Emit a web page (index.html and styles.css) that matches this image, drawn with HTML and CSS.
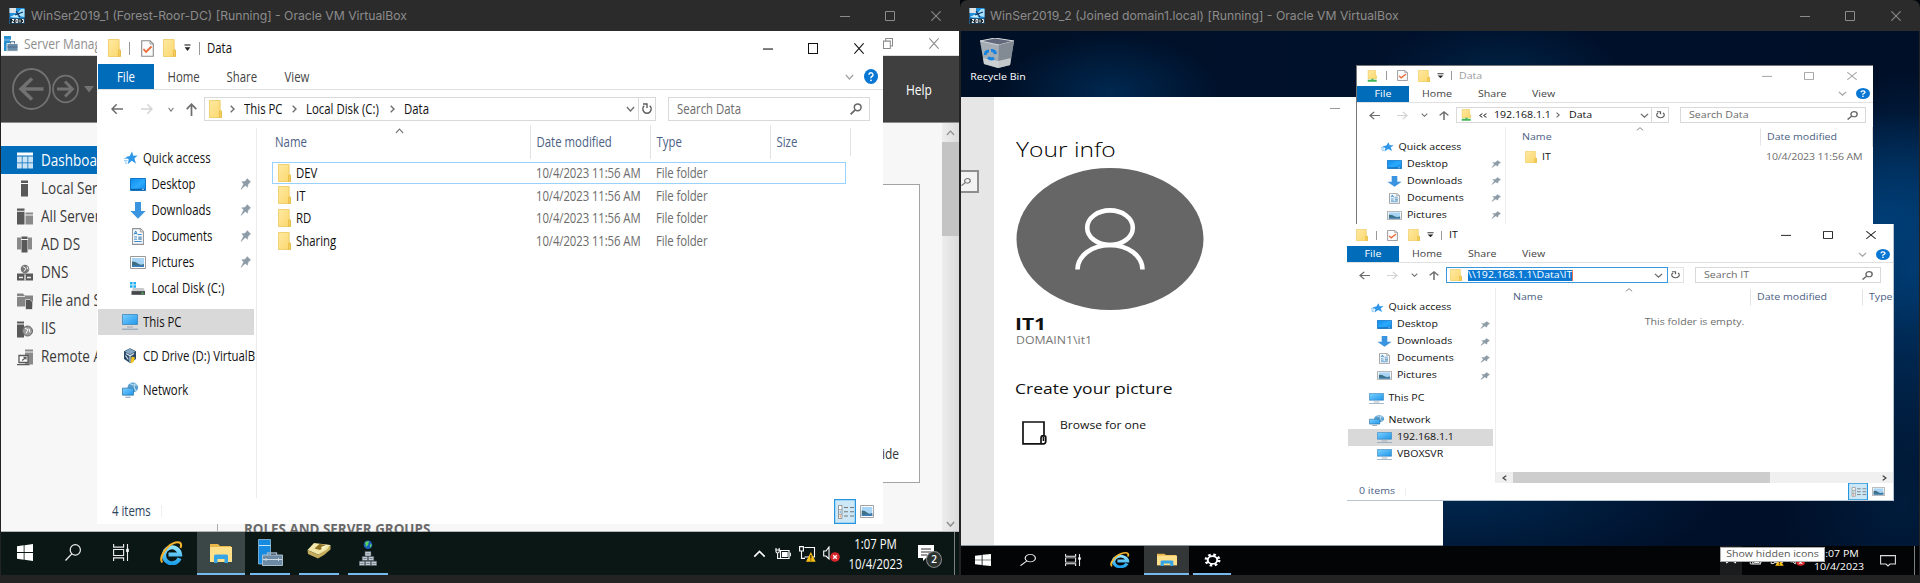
FILE: index.html
```html
<!DOCTYPE html>
<html lang="en">
<head>
<meta charset="utf-8">
<title>Oracle VM VirtualBox</title>
<link rel="stylesheet" href="styles.css">
</head>
<body>
<svg class="defs" aria-hidden="true">
  <defs>
    <linearGradient id="gFolder" x1="0" y1="0" x2="1" y2="1"><stop offset="0" stop-color="#ffe9a2"/><stop offset="1" stop-color="#fbd76c"/></linearGradient>
    <linearGradient id="gBlue" x1="0" y1="0" x2="1" y2="1"><stop offset="0" stop-color="#7cd0ff"/><stop offset="1" stop-color="#1e96ea"/></linearGradient>
    <linearGradient id="gDesk" x1="0" y1="0" x2="1" y2="1"><stop offset="0" stop-color="#0c8df0"/><stop offset=".55" stop-color="#2ba9fc"/><stop offset="1" stop-color="#0a86e8"/></linearGradient>
    <linearGradient id="gIe" x1="0" y1="0" x2="0" y2="1"><stop offset="0" stop-color="#8ee3ff"/><stop offset="1" stop-color="#1fa0ea"/></linearGradient>
  </defs>
  <symbol id="folder" viewBox="0 0 14 18" preserveAspectRatio="none"><path d="M.5.5H12V11H13.5V17.5H.5Z" fill="url(#gFolder)" stroke="#ecc755" stroke-width=".8"/><path d="M11.3 17.3V11.4L12.3 10.4 13.5 11.4V17.3Z" fill="#f7cf5c" stroke="#dcb13c" stroke-width=".6"/></symbol>
  <symbol id="netfolder" viewBox="0 0 14 18" preserveAspectRatio="none"><path d="M2.500.5H11V8.500H12.200V13H2.500Z" fill="url(#gFolder)" stroke="#ecc755" stroke-width=".8"/><path d="M6.3 13H8.700V14.800H12.500V17.500H2V14.800H6.3Z" fill="#45b656"/></symbol>
  <symbol id="check" viewBox="0 0 13 17" preserveAspectRatio="none"><path d="M.7.7H9L12.3 4V16.3H.7Z" fill="#fdfdfd" stroke="#8a8a8a" stroke-width="1.1"/><path d="M9 .7V4H12.3" fill="none" stroke="#8a8a8a" stroke-width=".8"/><path d="M2.5 9 5 12 10.5 6.5" fill="none" stroke="#ea6a36" stroke-width="1.8"/></symbol>
  <symbol id="dd" viewBox="0 0 8 8" preserveAspectRatio="none"><path d="M.5 1H7.5" stroke="#222" stroke-width="1.1"/><path d="M.8 3.3H7.2L4 7Z" fill="#222"/></symbol>
  <symbol id="min" viewBox="0 0 10 10" preserveAspectRatio="none"><path d="M0 5.5H10" stroke="currentColor"/></symbol>
  <symbol id="max" viewBox="0 0 10 10" preserveAspectRatio="none"><path d="M.5.5H9.5V9.5H.5Z" fill="none" stroke="currentColor"/></symbol>
  <symbol id="close" viewBox="0 0 10 10" preserveAspectRatio="none"><path d="M.3.3 9.7 9.7M9.7.3.3 9.7" fill="none" stroke="currentColor" stroke-width="1.1"/></symbol>
  <symbol id="restore" viewBox="0 0 10 10" preserveAspectRatio="none"><path d="M.5 2.8H7.3V9.5H.5ZM2.7 2.6V.5H9.5V7.3H7.5" fill="none" stroke="currentColor"/></symbol>
  <symbol id="down" viewBox="0 0 10 6" preserveAspectRatio="none"><path d="M1 1 5 5 9 1" fill="none" stroke="currentColor" stroke-width="1.5"/></symbol>
  <symbol id="up" viewBox="0 0 10 6" preserveAspectRatio="none"><path d="M1 5 5 1 9 5" fill="none" stroke="currentColor" stroke-width="1.2"/></symbol>
  <symbol id="right" viewBox="0 0 5 8" preserveAspectRatio="none"><path d="M.7.8 4 4 .7 7.2" fill="none" stroke="currentColor" stroke-width="1.4"/></symbol>
  <symbol id="left" viewBox="0 0 5 8" preserveAspectRatio="none"><path d="M4.3.8 1 4 4.3 7.2" fill="none" stroke="currentColor" stroke-width="1.4"/></symbol>
  <symbol id="back" viewBox="0 0 12 12" preserveAspectRatio="none"><path d="M12 6H1M5.7 1.2 1 6 5.7 10.8" fill="none" stroke="currentColor" stroke-width="1.5"/></symbol>
  <symbol id="fwd" viewBox="0 0 12 12" preserveAspectRatio="none"><path d="M0 6H11M6.3 1.2 11 6 6.3 10.8" fill="none" stroke="currentColor" stroke-width="1.5"/></symbol>
  <symbol id="uparrow" viewBox="0 0 11 13" preserveAspectRatio="none"><path d="M5.5 13V1.2M.7 6.2 5.5 1.2 10.3 6.2" fill="none" stroke="currentColor" stroke-width="1.7"/></symbol>
  <symbol id="refresh" viewBox="0 0 10 12" preserveAspectRatio="none"><path d="M2.2 2.8A4.1 4.3 0 1 0 7.8 2.8" fill="none" stroke="#5c5c5c" stroke-width="1.5"/><path d="M1 1H5V5" fill="none" stroke="#5c5c5c" stroke-width="1.4"/></symbol>
  <symbol id="mag" viewBox="0 0 12 12" preserveAspectRatio="none"><circle cx="7.7" cy="4.3" r="3.4" fill="none" stroke="currentColor" stroke-width="1.5"/><path d="M5.2 6.8.6 11.4" stroke="currentColor" stroke-width="1.7"/></symbol>
  <symbol id="star" viewBox="0 0 14 14" preserveAspectRatio="none"><path d="M8 .5 9.3 4.7 13.6 4.6 10.4 7.6 12 12.6 7.8 9.8 3.6 13.2 4.8 8.6 1.6 6 5.8 5Z" fill="#2f97e8"/><path d="M.2 7.5H4M0 9.8H3.6M1 12H3" stroke="#68b6f0" stroke-width=".9"/></symbol>
  <symbol id="desktop" viewBox="0 0 16 13" preserveAspectRatio="none"><path d="M.5.5H15.5V12.5H.5Z" fill="url(#gDesk)" stroke="#1374c4"/><path d="M1 11.4H15" stroke="#0d5fa8" stroke-width="1.2"/><path d="M12 11.3h2" stroke="#fff" stroke-width=".7"/></symbol>
  <symbol id="download" viewBox="0 0 16 17" preserveAspectRatio="none"><path d="M5 0H11V9H15.6L8 16.8.4 9H5Z" fill="#3a94e0"/></symbol>
  <symbol id="doc" viewBox="0 0 13 17" preserveAspectRatio="none"><path d="M.6.6H9.2L12.4 3.8V16.4H.6Z" fill="#f7f9fb" stroke="#909498" stroke-width="1.1"/><path d="M9 .8V4H12.2" fill="#ddd" stroke="#909498" stroke-width=".8"/><path d="M2.3 6.5 4 3 5.6 6.5M2.9 5.5H5M6.5 6.5H10.5M2.3 9H5.5M2.3 11.2H5.5M2.3 13.5H10.5" fill="none" stroke="#3487c9"/><path d="M6.8 8.4H10.6V12H6.8Z" fill="#7fa9c4"/></symbol>
  <symbol id="pic" viewBox="0 0 16 13" preserveAspectRatio="none"><path d="M.5.5H15.5V12.5H.5Z" fill="#fff" stroke="#9a9a9a"/><path d="M2 2H14V11H2Z" fill="#a8d5f5"/><path d="M2 5.5Q6 5.5 8 7.5T14 8V11H2Z" fill="#3f6f80"/><path d="M2 9.3H14V11H2Z" fill="#3c7fb8"/></symbol>
  <symbol id="disk" viewBox="0 0 16 14" preserveAspectRatio="none"><path d="M0 0H2.600V2.8H0ZM3.400 0H6V2.8H3.400ZM0 3.5H2.600V6.3H0ZM3.400 3.5H6V6.3H3.400Z" fill="#22aef0"/><path d="M3 6.500H13.5L15 10H1.5Z" fill="#c7c9cb"/><path d="M1.5 9.8H15V13.8H1.5Z" fill="#44484b"/><path d="M11.5 12H13.5" stroke="#4be06a" stroke-width="1.3"/></symbol>
  <symbol id="pc" viewBox="0 0 16 16" preserveAspectRatio="none"><path d="M.5.5H15.5V10.5H.5Z" fill="url(#gBlue)" stroke="#3d86bd" stroke-width=".8"/><path d="M5 13H11" stroke="#9aa6b0"/><path d="M0 15.2H16" stroke="#8ba1b7" stroke-width="1.1"/></symbol>
  <symbol id="net" viewBox="0 0 16 17" preserveAspectRatio="none"><circle cx="10.8" cy="5.8" r="5.3" fill="#5a9fce"/><path d="M8 1.6Q12 4 15 3M13 1.2Q10.5 6 14.5 9.8" fill="none" stroke="#bcdff2" stroke-width="1.1"/><path d="M.5 6.5H11.5V14H.5Z" fill="url(#gBlue)" stroke="#3377aa" stroke-width=".8"/><path d="M3.5 16.2H8.5" stroke="#8095a8"/></symbol>
  <symbol id="cd" viewBox="0 0 16 16" preserveAspectRatio="none"><path d="M8 .3 14 3.3V11L8 15 2 11V3.3Z" fill="#294967"/><path d="M8 .8 13.3 3.4 8 6.4 2.7 3.4Z" fill="#86a8c4"/><path d="M4 5.5 8 7.8 12 5.5M8 8V14M3.5 7.5 6.3 11.5" fill="none" stroke="#dce8f1" stroke-width="1.1"/><path d="M9.6 8.4 13 9.5 11.5 14 8.5 15.6Z" fill="#f2c21b"/></symbol>
  <symbol id="pin" viewBox="0 0 11 12" preserveAspectRatio="none"><path d="M7.2.6 10.6 4 9.4 4.8 7.8 6.8 7.6 9.2 5.2 7.4 1 11.4 3.7 6 1.8 3.8 4.6 3.6 6.4 2Z" fill="#8d9ba6" stroke="#8d9ba6" stroke-width=".5"/></symbol>
  <symbol id="help" viewBox="0 0 14 14" preserveAspectRatio="none"><circle cx="7" cy="7" r="7" fill="#0877d4"/><path d="M5 5.4Q5.1 3.6 7 3.6T9 5.3Q9 6.4 7.8 7T7 8.6" fill="none" stroke="#fff" stroke-width="1.4"/><circle cx="7" cy="10.6" r=".9" fill="#fff"/></symbol>
  <symbol id="details" viewBox="0 0 22 25" preserveAspectRatio="none"><path d="M.6.6H21.4V24.4H.6Z" fill="#cce8f7" stroke="#2796e0" stroke-width="1.2"/><path d="M4.5 6.5H8V19.5H4.5ZM4.5 10.8H8M4.5 15.2H8" fill="#fff" stroke="#8c8c8c" stroke-width=".9"/><path d="M10 8.5H14M16 8.5H20M10 12.8H14M16 12.8H20M10 17H14M16 17H20" stroke="#777" stroke-width="1.1"/><path d="M6.2 12V14" stroke="#4ba0e0"/><path d="M6.2 16.4V18.4" stroke="#e0703a"/></symbol>
  <symbol id="vbox" viewBox="0 0 16 16" preserveAspectRatio="none"><path d="M.5 0H15.5V16H.5Z" fill="#1f8fdc"/><path d="M.5 0H7V5H.5Z" fill="#dfe6ea"/><path d="M7 7 12 1H15.5V9L10 8Z" fill="#a9e2ff"/><path d="M1 9 7 6 10 10Z" fill="#ccefff"/><path d="M7 3 11 9M6 7 14 4" stroke="#0b2f5c" stroke-width="1.1"/><path d="M1 10.5H15.5V15.8H1Z" fill="#1a2833"/><path d="M3 11.5H5L3 14.5H5M7 11.5H8.8V14.5H7ZM11 11.5V14.5M13 11.5H14.5V14.5H13" fill="none" stroke="#fff" stroke-width=".9"/></symbol>
  <symbol id="smgr" viewBox="0 0 14 16" preserveAspectRatio="none"><path d="M0 1H7V4.4H0ZM0 5H6V15H0Z" fill="#2a8fd0"/><path d="M3 8H14V15.3H3Z" fill="#6d8ca8" stroke="#fff" stroke-width=".8"/><path d="M6.5 8V6.3H10.5V8M3.5 11.3H13.5" fill="none" stroke="#486b8c"/></symbol>
  <symbol id="win" viewBox="0 0 16 16" preserveAspectRatio="none"><path d="M0 2.2 6.7 1.2V7.6H0ZM7.5 1.1 16 0V7.6H7.5ZM0 8.4H6.7V14.8L0 13.8ZM7.5 8.4H16V16L7.5 14.9Z" fill="#fff"/></symbol>
  <symbol id="search" viewBox="0 0 16 17" preserveAspectRatio="none"><ellipse cx="10.3" cy="5.9" rx="5.1" ry="5.3" fill="none" stroke="currentColor" stroke-width="1.2"/><path d="M6.8 9.9.5 16.5" stroke="currentColor" stroke-width="1.3"/></symbol>
  <symbol id="taskview" viewBox="0 0 16 16" preserveAspectRatio="none"><path d="M.6 0V3H10.6V0M.6 5.2H10.6V10.8H.6ZM.6 16V13H10.6V16M14.5 0V16" fill="none" stroke="#eee" stroke-width="1.1"/><path d="M13.2 4.5H15.8V7.5H13.2Z" fill="#fff"/></symbol>
  <symbol id="ie" viewBox="0 0 23 24" preserveAspectRatio="none"><path d="M19.5 17.2A8 8 0 1 1 20 13.5H8.5" fill="none" stroke="url(#gIe)" stroke-width="4.2"/><path d="M2.2 21.5C-1.5 16 7.5 3.5 15.5 1.5 20.5.3 22 3 20.5 6.8" fill="none" stroke="#f3b229" stroke-width="2.1"/></symbol>
  <symbol id="explorer" viewBox="0 0 22 20" preserveAspectRatio="none"><path d="M0 1H8L10 3H21V6H0Z" fill="#e9b64a"/><path d="M0 4H22V19H0Z" fill="#ffe08a"/><path d="M4 20V13Q4 11.5 5.5 11.5H16.5Q18 11.5 18 13V20H14.5V16H7.5V20Z" fill="#37a5e3"/></symbol>
  <symbol id="server" viewBox="0 0 25 27" preserveAspectRatio="none"><path d="M.5.5H12.5V25H.5Z" fill="#178be0" stroke="#a3d1f0" stroke-width=".7"/><path d="M1 6.5H12.5" stroke="#c7e5fa"/><path d="M9.5 16V14H18.5V16" fill="none" stroke="#9cb2c6" stroke-width="1.3"/><path d="M4.5 16H24.5V26.5H4.5Z" fill="#6d8aa4" stroke="#b7c9d8" stroke-width=".9"/><path d="M5 20.5H24M8 19V22M20.5 19V22" stroke="#cdd9e3"/></symbol>
  <symbol id="card" viewBox="0 0 24 17" preserveAspectRatio="none"><path d="M.5 8 7 1 23.5 3 19 10.5 11 12.5Z" fill="#f2e6a9"/><path d="M.5 8 11 12.5V16.5L1 12ZM11 12.5 19.5 8 23.5 3V7.5L17 13 11 16.5Z" fill="#c3ac5c"/><path d="M7.5 6.5 12.5 2 19 3 13 8Z" fill="#8e7020"/><path d="M14 5 20.5 2.5 15.5 8Z" fill="#fff7cf"/></symbol>
  <symbol id="tree" viewBox="0 0 18 26" preserveAspectRatio="none"><circle cx="9" cy="4.7" r="4.3" fill="#1b5fb6"/><path d="M6 2 10 1 9 5 7 7ZM11 4 13 5 11 8Z" fill="#5bd25d"/><path d="M6 11.5H12V16H6ZM3.2 16.5H8.7V20.5H3.2ZM9.3 16.5H14.8V20.5H9.3ZM.3 21.2H5.8V25.5H.3ZM6.3 21.2H11.7V25.5H6.3ZM12.2 21.2H17.7V25.5H12.2Z" fill="#c1cad1" stroke="#4b5961" stroke-width=".6"/><path d="M7.5 13.8H10.5M4.5 18.5H7.5M10.5 18.5H13.5M1.5 23.5H4.5M7.5 23.5H10.5M13.5 23.5H16.5" stroke="#66737c" stroke-width=".8"/></symbol>
  <symbol id="gear" viewBox="0 0 16 16" preserveAspectRatio="none"><circle cx="8" cy="8" r="5.9" fill="none" stroke="#fff" stroke-width="3.2" stroke-dasharray="2.3 2.334"/><circle cx="8" cy="8" r="4.5" fill="none" stroke="#fff" stroke-width="1.9"/></symbol>
  <symbol id="battery" viewBox="0 0 16 13" preserveAspectRatio="none"><path d="M1 1V4.5Q1 6 2.6 6T4.2 4.5V1M2.6 6V11.5H5M.3 3H5" fill="none" stroke="#fff" stroke-width="1.1"/><path d="M5.5 3.5H14V11.5H5.5Z" fill="#0b1715" stroke="#fff" stroke-width="1.2"/><path d="M7 5H12.7V10H7Z" fill="#fff"/><path d="M15.4 5.7V9.3" stroke="#fff"/></symbol>
  <symbol id="network" viewBox="0 0 17 16" preserveAspectRatio="none"><path d="M5.5 1.5H15.5V11H5.5M8 13.5H12" fill="none" stroke="#fff" stroke-width="1.1"/><path d="M.6.6H4.4V5H.6ZM2.5 5V12.4H6" fill="none" stroke="#fff" stroke-width="1.1"/><path d="M11.8 6 16.7 15.7H7Z" fill="#f9bf14"/><path d="M11.8 9V12.4M11.8 13.4V14.6" stroke="#372600" stroke-width="1.2"/></symbol>
  <symbol id="speaker" viewBox="0 0 17 16" preserveAspectRatio="none"><path d="M.7 5H3L6 1V13L3 10H.7Z" fill="none" stroke="#fff" stroke-width="1.1"/><circle cx="12" cy="11" r="4.8" fill="#d7262b"/><path d="M10.2 9.2 13.8 12.8M13.8 9.2 10.2 12.8" stroke="#fff" stroke-width="1.3"/></symbol>
</svg>

<main class="host">
  <section class="vm vm-left">
    <header class="vm-title"><svg class="vbox"><use href="#vbox"/></svg><span class="vm-name">WinSer2019_1 (Forest-Roor-DC) [Running] - Oracle VM VirtualBox</span>
      <svg class="wc"><use href="#min"/></svg><svg class="wc"><use href="#max"/></svg><svg class="wc"><use href="#close"/></svg></header>
    <div class="screen screen-left">
      <div class="sm">
        <div class="sm-title"><svg class="sm-logo"><use href="#smgr"/></svg><span class="t">Server Manag</span><svg class="sm-wc"><use href="#restore"/></svg><svg class="sm-wc"><use href="#close"/></svg></div>
        <div class="sm-head">
          <svg class="sm-arrows" viewBox="0 0 84 44"><g fill="none" stroke="#727272"><ellipse cx="20.500" cy="22" rx="18.500" ry="20" stroke-width="1.800"/><path d="M32.500 22H10M21 11.500 10 22 21 32.500" stroke-width="3.500"/><ellipse cx="54.500" cy="22" rx="12.500" ry="13.300" stroke-width="1.700"/><path d="M46 22H61M54 14.500 61.500 22 54 29.500" stroke-width="2.800"/></g><path d="M73 19H83L78 25.500Z" fill="#727272"/></svg>
          <span class="t">Help</span>
        </div>
        <div class="sm-body">
          <nav class="sm-nav">
            <div class="sm-item on"><svg viewBox="0 0 16 16"><path d="M0 0H16V3H0Z" fill="#fff"/><path d="M0 4H4.800V10H0ZM5.500 4H10.500V10H5.500ZM11.200 4H16V10H11.200ZM0 10.800H4.800V16H0ZM5.500 10.800H10.500V16H5.500ZM11.200 10.800H16V16H11.200Z" fill="#c9e2f4"/></svg><span class="t">Dashboa</span></div>
            <div class="sm-item"><svg viewBox="0 0 16 16"><path d="M4 0H11V2.500H4ZM4 3.500H11V16H4Z" fill="#595959"/></svg><span class="t">Local Ser</span></div>
            <div class="sm-item"><svg viewBox="0 0 16 16"><path d="M0 0H7.500V2.200H0ZM0 3.200H7.500V16H0Z" fill="#595959"/><path d="M8.500 4H16V6H8.500ZM8.500 7H16V16H8.500Z" fill="#8a8a8a"/></svg><span class="t">All Server</span></div>
            <div class="sm-item"><svg viewBox="0 0 16 16"><path d="M0 1H4V13H0ZM11 1H15V13H11Z" fill="#8a8a8a"/><path d="M4.500 0H10.500V2.500H4.500ZM4.500 3.500H10.500V16H4.500Z" fill="#595959"/></svg><span class="t">AD DS</span></div>
            <div class="sm-item"><svg viewBox="0 0 16 16"><circle cx="8" cy="4.500" r="4.300" fill="#777"/><path d="M6 2 9 4 7 7M10 2 11 5" stroke="#eee" fill="none"/><path d="M0 9H16V16H0Z" fill="#595959"/><path d="M2 13H6M10 13H14M8 10V16" stroke="#eee" stroke-width="1.300"/></svg><span class="t">DNS</span></div>
            <div class="sm-item"><svg viewBox="0 0 16 16"><path d="M0 0H6L7.500 2H16V13H0Z" fill="#858585"/><path d="M0 3H8" stroke="#ddd"/><path d="M8.500 6H13L15.500 8.500V16H8.500Z" fill="#555" stroke="#fff" stroke-width=".6"/></svg><span class="t">File and S</span></div>
            <div class="sm-item"><svg viewBox="0 0 16 16"><path d="M0 0H7V2H0ZM0 3H7V16H0Z" fill="#595959"/><circle cx="10.500" cy="9.500" r="5" fill="#999" stroke="#666"/><path d="M8 7 11 8 9 12M12 7 13 11" stroke="#fff" fill="none"/></svg><span class="t">IIS</span></div>
            <div class="sm-item"><svg viewBox="0 0 16 16"><path d="M8 0H16V2H8ZM8 3H16V15H8Z" fill="#8a8a8a"/><path d="M2 6H11V13H2Z" fill="#fff" stroke="#595959" stroke-width="1.300"/><path d="M5 11 9 8M6.500 7.800H9V10M0 15.200H12.500" stroke="#595959" fill="none" stroke-width="1.200"/></svg><span class="t">Remote A</span></div>
          </nav>
          <div class="sm-main"><div class="sm-panel"><span class="t">ide</span></div><div class="sm-roles"><span class="t">ROLES AND SERVER GROUPS</span></div></div>
          <div class="sm-scroll"><svg><use href="#up"/></svg><i></i><svg><use href="#down"/></svg></div>
        </div>
      </div>

      <div class="ex ex1">
        <div class="ex-title"><svg class="fi"><use href="#folder"/></svg><i class="bar"></i><svg class="ck"><use href="#check"/></svg><svg class="fi"><use href="#folder"/></svg><svg class="dd"><use href="#dd"/></svg><i class="bar"></i><span class="t">Data</span><svg class="wc"><use href="#min"/></svg><svg class="wc"><use href="#max"/></svg><svg class="wc"><use href="#close"/></svg></div>
        <div class="ex-tabs"><b class="file"><span class="t">File</span></b><span class="t">Home</span><span class="t">Share</span><span class="t">View</span><svg class="chev"><use href="#down"/></svg><svg class="help"><use href="#help"/></svg></div>
        <div class="ex-addr"><svg class="arr"><use href="#back"/></svg><svg class="arr dim"><use href="#fwd"/></svg><svg class="sc"><use href="#down"/></svg><svg class="ua"><use href="#uparrow"/></svg>
          <div class="box"><svg class="fi"><use href="#folder"/></svg><svg class="cr"><use href="#right"/></svg><span class="t w1">This PC</span><svg class="cr"><use href="#right"/></svg><span class="t w2">Local Disk (C:)</span><svg class="cr"><use href="#right"/></svg><span class="t">Data</span><svg class="bc"><use href="#down"/></svg><span class="rf"><svg><use href="#refresh"/></svg></span></div>
          <div class="search"><span class="t">Search Data</span><svg><use href="#mag"/></svg></div></div>
        <div class="ex-body">
          <nav class="tree">
            <div class="row l1"><svg class="i-star"><use href="#star"/></svg><span class="t">Quick access</span></div>
            <div class="row l2"><svg class="i-desk"><use href="#desktop"/></svg><span class="t">Desktop</span><svg class="pin"><use href="#pin"/></svg></div>
            <div class="row l2"><svg class="i-down"><use href="#download"/></svg><span class="t">Downloads</span><svg class="pin"><use href="#pin"/></svg></div>
            <div class="row l2"><svg class="i-doc"><use href="#doc"/></svg><span class="t">Documents</span><svg class="pin"><use href="#pin"/></svg></div>
            <div class="row l2"><svg class="i-desk"><use href="#pic"/></svg><span class="t">Pictures</span><svg class="pin"><use href="#pin"/></svg></div>
            <div class="row l2"><svg class="i-desk"><use href="#disk"/></svg><span class="t">Local Disk (C:)</span></div>
            <div class="row l1 gap on"><svg class="i-pc"><use href="#pc"/></svg><span class="t">This PC</span></div>
            <div class="row l1 gap"><svg class="i-pc"><use href="#cd"/></svg><span class="t">CD Drive (D:) VirtualB</span></div>
            <div class="row l1 gap"><svg class="i-pc"><use href="#net"/></svg><span class="t">Network</span></div>
          </nav>
          <div class="list">
            <svg class="sort"><use href="#up"/></svg>
            <div class="cols"><span class="t">Name</span><span class="t">Date modified</span><span class="t">Type</span><span class="t">Size</span><span></span></div>
            <div class="files">
              <div class="f on"><svg class="fi"><use href="#folder"/></svg><span class="t">DEV</span><span class="t g">10/4/2023 11:56 AM</span><span class="t g">File folder</span></div>
              <div class="f"><svg class="fi"><use href="#folder"/></svg><span class="t">IT</span><span class="t g">10/4/2023 11:56 AM</span><span class="t g">File folder</span></div>
              <div class="f"><svg class="fi"><use href="#folder"/></svg><span class="t">RD</span><span class="t g">10/4/2023 11:56 AM</span><span class="t g">File folder</span></div>
              <div class="f"><svg class="fi"><use href="#folder"/></svg><span class="t">Sharing</span><span class="t g">10/4/2023 11:56 AM</span><span class="t g">File folder</span></div>
            </div>
          </div>
        </div>
        <div class="status"><span class="t">4 items</span><i></i><svg class="dv"><use href="#details"/></svg><svg class="pv"><use href="#pic"/></svg></div>
      </div>

      <footer class="task task-left">
        <div class="tb"><svg class="k-win"><use href="#win"/></svg></div><div class="tb"><svg class="k-win"><use href="#search"/></svg></div><div class="tb"><svg class="k-win"><use href="#taskview"/></svg></div><div class="tb"><svg class="k-ie"><use href="#ie"/></svg></div>
        <div class="tb active"><svg class="k-ex"><use href="#explorer"/></svg></div><div class="tb open"><svg class="k-srv"><use href="#server"/></svg></div><div class="tb open"><svg class="k-card"><use href="#card"/></svg></div><div class="tb open"><svg class="k-tree"><use href="#tree"/></svg></div>
        <div class="tray"><svg class="y-up"><use href="#up"/></svg><svg class="y-bat"><use href="#battery"/></svg><svg class="y-net"><use href="#network"/></svg><svg class="y-spk"><use href="#speaker"/></svg>
          <div class="clock"><span class="t">1:07 PM</span><span class="t">10/4/2023</span></div>
          <div class="note"><svg viewBox="0 0 16 16"><path d="M0 0H16V13H8L5 16V13H0Z" fill="#fff"/><path d="M3 4H13M3 7H13M3 10H9" stroke="#333" stroke-width="1.200"/></svg><b>2</b></div><i class="peek"></i></div>
      </footer>
    </div>
  </section>

  <section class="vm vm-right">
    <header class="vm-title"><svg class="vbox"><use href="#vbox"/></svg><span class="vm-name">WinSer2019_2 (Joined domain1.local) [Running] - Oracle VM VirtualBox</span>
      <svg class="wc"><use href="#min"/></svg><svg class="wc"><use href="#max"/></svg><svg class="wc"><use href="#close"/></svg></header>
    <div class="screen screen-right">
      <div class="bin"><svg viewBox="0 0 36 30" preserveAspectRatio="none"><path d="M1 3 16 0 35 3 31 27 19 30 5 26Z" fill="#a4acb4"/><path d="M1 3 16 0 35 3 20 7Z" fill="#62697a" stroke="#d4d8db"/><path d="M20 7 35 3 31 27 19 30Z" fill="#828b94"/><path d="M4 20 19 23 32 20 31 27 19 30 5 26Z" fill="#d9dcdd" opacity=".75"/><g fill="none" stroke="#1583df" stroke-width="3"><path d="M6.500 17Q6 13 10 13M12 12.500Q16 12 16.500 16M15 20Q12 22 9 19.500"/></g></svg><span class="t">Recycle Bin</span></div>

      <div class="settings">
        <aside><div class="sbox"><svg><use href="#mag"/></svg></div></aside>
        <div class="info">
          <svg class="smin"><use href="#min"/></svg>
          <h1><span class="t">Your info</span></h1>
          <svg class="avatar" viewBox="0 0 187 142"><ellipse cx="93.500" cy="71" rx="93.500" ry="71" fill="#666"/><g fill="none" stroke="#fff" stroke-width="4.600"><ellipse cx="93.500" cy="59.700" rx="22.800" ry="17.300"/><path d="M61 101.500A32.500 24.500 0 0 1 126 101.500"/></g></svg>
          <h2><span class="t">IT1</span></h2>
          <p class="dom"><span class="t">DOMAIN1\it1</span></p>
          <h3><span class="t">Create your picture</span></h3>
          <div class="browse"><svg viewBox="0 0 25 24"><path d="M19 22.800H1V1H22V14M19 22.800V17Q19 14.500 21.500 14.500T23.800 17V20Q23.800 22.800 21.500 22.800ZM21.500 15.500V20" fill="none" stroke="#111" stroke-width="1.700"/></svg><span class="t">Browse for one</span></div>
        </div>
      </div>

      <div class="ex exr ex2">
        <div class="ex-title"><svg class="fi"><use href="#netfolder"/></svg><i class="bar"></i><svg class="ck"><use href="#check"/></svg><svg class="fi"><use href="#folder"/></svg><svg class="dd"><use href="#dd"/></svg><i class="bar"></i><span class="t">Data</span><svg class="wc"><use href="#min"/></svg><svg class="wc"><use href="#max"/></svg><svg class="wc"><use href="#close"/></svg></div>
        <div class="ex-tabs"><b class="file"><span class="t">File</span></b><span class="t">Home</span><span class="t">Share</span><span class="t">View</span><svg class="chev"><use href="#down"/></svg><svg class="help"><use href="#help"/></svg></div>
        <div class="ex-addr"><svg class="arr"><use href="#back"/></svg><svg class="arr dim"><use href="#fwd"/></svg><svg class="sc"><use href="#down"/></svg><svg class="ua"><use href="#uparrow"/></svg>
          <div class="box"><svg class="fi"><use href="#netfolder"/></svg><span class="dbl"><svg><use href="#left"/></svg><svg><use href="#left"/></svg></span><span class="t w1">192.168.1.1</span><svg class="cr"><use href="#right"/></svg><span class="t">Data</span><svg class="bc"><use href="#down"/></svg><span class="rf"><svg><use href="#refresh"/></svg></span></div>
          <div class="search"><span class="t">Search Data</span><svg><use href="#mag"/></svg></div></div>
        <div class="ex-body">
          <nav class="tree">
            <div class="row l1"><svg class="i-star"><use href="#star"/></svg><span class="t">Quick access</span></div>
            <div class="row l2"><svg class="i-desk"><use href="#desktop"/></svg><span class="t">Desktop</span><svg class="pin"><use href="#pin"/></svg></div>
            <div class="row l2"><svg class="i-down"><use href="#download"/></svg><span class="t">Downloads</span><svg class="pin"><use href="#pin"/></svg></div>
            <div class="row l2"><svg class="i-doc"><use href="#doc"/></svg><span class="t">Documents</span><svg class="pin"><use href="#pin"/></svg></div>
            <div class="row l2"><svg class="i-desk"><use href="#pic"/></svg><span class="t">Pictures</span><svg class="pin"><use href="#pin"/></svg></div>
          </nav>
          <div class="list">
            <svg class="sort"><use href="#up"/></svg>
            <div class="cols"><span class="t">Name</span><span class="t">Date modified</span><span></span></div>
            <div class="files"><div class="f"><svg class="fi"><use href="#folder"/></svg><span class="t">IT</span><span class="t g">10/4/2023 11:56 AM</span></div></div>
          </div>
        </div>
      </div>

      <div class="ex exr ex3">
        <div class="ex-title"><svg class="fi"><use href="#folder"/></svg><i class="bar"></i><svg class="ck"><use href="#check"/></svg><svg class="fi"><use href="#folder"/></svg><svg class="dd"><use href="#dd"/></svg><i class="bar"></i><span class="t">IT</span><svg class="wc"><use href="#min"/></svg><svg class="wc"><use href="#max"/></svg><svg class="wc"><use href="#close"/></svg></div>
        <div class="ex-tabs"><b class="file"><span class="t">File</span></b><span class="t">Home</span><span class="t">Share</span><span class="t">View</span><svg class="chev"><use href="#down"/></svg><svg class="help"><use href="#help"/></svg></div>
        <div class="ex-addr"><svg class="arr"><use href="#back"/></svg><svg class="arr dim"><use href="#fwd"/></svg><svg class="sc"><use href="#down"/></svg><svg class="ua"><use href="#uparrow"/></svg>
          <div class="box focus"><svg class="fi"><use href="#folder"/></svg><span class="sel"><span class="t">\\192.168.1.1\Data\IT</span></span><svg class="bc"><use href="#down"/></svg></div><span class="rf"><svg><use href="#refresh"/></svg></span>
          <div class="search"><span class="t">Search IT</span><svg><use href="#mag"/></svg></div></div>
        <div class="ex-body">
          <nav class="tree">
            <div class="row l1"><svg class="i-star"><use href="#star"/></svg><span class="t">Quick access</span></div>
            <div class="row l2"><svg class="i-desk"><use href="#desktop"/></svg><span class="t">Desktop</span><svg class="pin"><use href="#pin"/></svg></div>
            <div class="row l2"><svg class="i-down"><use href="#download"/></svg><span class="t">Downloads</span><svg class="pin"><use href="#pin"/></svg></div>
            <div class="row l2"><svg class="i-doc"><use href="#doc"/></svg><span class="t">Documents</span><svg class="pin"><use href="#pin"/></svg></div>
            <div class="row l2"><svg class="i-desk"><use href="#pic"/></svg><span class="t">Pictures</span><svg class="pin"><use href="#pin"/></svg></div>
            <div class="row l1 gap"><svg class="i-pc"><use href="#pc"/></svg><span class="t">This PC</span></div>
            <div class="row l1 gap"><svg class="i-pc"><use href="#net"/></svg><span class="t">Network</span></div>
            <div class="row l2 on"><svg class="i-pc"><use href="#pc"/></svg><span class="t">192.168.1.1</span></div>
            <div class="row l2"><svg class="i-pc"><use href="#pc"/></svg><span class="t">VBOXSVR</span></div>
          </nav>
          <div class="list">
            <svg class="sort"><use href="#up"/></svg>
            <div class="cols"><span class="t">Name</span><span class="t">Date modified</span><span class="t">Type</span></div>
            <div class="empty"><span class="t">This folder is empty.</span></div>
            <div class="hscroll"><svg><use href="#left"/></svg><i></i><svg><use href="#right"/></svg></div>
          </div>
        </div>
        <div class="status"><span class="t">0 items</span><i></i><svg class="dv"><use href="#details"/></svg><svg class="pv"><use href="#pic"/></svg></div>
      </div>

      <footer class="task task-right">
        <div class="tb"><svg class="k-win"><use href="#win"/></svg></div><div class="tb"><svg class="k-win"><use href="#search"/></svg></div><div class="tb"><svg class="k-win"><use href="#taskview"/></svg></div><div class="tb"><svg class="k-ie"><use href="#ie"/></svg></div>
        <div class="tb active"><svg class="k-ex"><use href="#explorer"/></svg></div><div class="tb open"><svg class="k-gear"><use href="#gear"/></svg></div>
        <div class="tray"><span class="y-hover"><svg class="y-up"><use href="#up"/></svg></span><svg class="y-bat"><use href="#battery"/></svg><svg class="y-net"><use href="#network"/></svg><svg class="y-spk"><use href="#speaker"/></svg>
          <div class="clock"><span class="t">1:07 PM</span><span class="t">10/4/2023</span></div>
          <div class="note"><svg viewBox="0 0 16 12"><path d="M.600.600H15.400V9H10L8 11 6 9H.600Z" fill="none" stroke="#ddd" stroke-width="1.100"/></svg></div><i class="peek"></i></div>
      </footer>
      <div class="tip"><span class="t">Show hidden icons</span></div>
    </div>
  </section>
</main>
</body>
</html>
```
FILE: styles.css
```css
* { box-sizing: border-box; }
body { margin: 0; background: #232323; font-family: "Open Sans", "Noto Sans", sans-serif; overflow: hidden; }
h1, h2, h3, p { margin: 0; font-weight: 400; }
svg { display: block; flex: none; }
.defs { position: absolute; width: 0; height: 0; }
.t { display: inline-block; white-space: nowrap; transform: scaleY(var(--sy)); line-height: 1; }

.host { display: flex; width: 1920px; height: 583px; background: #232323; }
.vm { display: flex; flex-direction: column; height: 583px; }
.vm-left { width: 960px; padding-left: 1px; }
.vm-right { width: 960px; padding: 0 1px 0 1px; background: linear-gradient(#02060e 0 12px, #232323 12px); }
.vm-title { display: grid; align-items: center; height: 31px; background: #2b2b2b; color: #8b8b8b; }
.vm-left .vm-title { margin-left: -1px; padding-left: 9px; grid-template-columns: 22px 809px 45px 46px 1fr; }
.vm-right .vm-title { margin: 0 -1px; padding-left: 9px; border-radius: 8px 8px 0 0; grid-template-columns: 21px 810px 45px 46px 1fr; }
.vbox { width: 16px; height: 16px; }
.vm-name { font-family: Inter, "Open Sans", sans-serif; font-size: 12.200px; line-height: 16px; white-space: nowrap; padding-top: 1px; }
.vm-title .wc { width: 10px; height: 10px; }

.screen { position: relative; height: 544px; overflow: hidden; display: flex; flex-direction: column; }
.screen-left { width: 958px; --sy: 1.2; }
.screen-right { width: 958px; --sy: .84;
  background:
    radial-gradient(110px 60px at 150px 62px, #002850 0, transparent 100%),
    radial-gradient(120px 55px at 540px 42px, #002244 0, transparent 100%),
    radial-gradient(150px 110px at 925px 190px, #003d75 0, transparent 100%),
    radial-gradient(130px 200px at 950px 240px, #00386c 0, transparent 100%),
    radial-gradient(120px 140px at 940px 470px, #001c3c 0, transparent 100%),
    radial-gradient(260px 85px at 500px 465px, #00274e 0, transparent 100%),
    linear-gradient(90deg, #001026, #00112c 40%, #000f28 100%); }

/* Server Manager */
.sm { height: 501px; display: flex; flex-direction: column; background: #f7f7f7; border-bottom: 1px solid #b5b5b5; }
.sm-title { height: 25px; background: #fff; display: grid; grid-template-columns: 20px 859px 46px 1fr; padding-left: 3px; align-items: center; color: #8e8e8e; font-size: 12px; border-bottom: 1px solid #ddd; }
.sm-title .t { position: relative; top: 1px; }
.sm-logo { width: 14px; height: 17px; }
.sm-wc { width: 10px; height: 11px; color: #8a8a8a; }
.sm-head { height: 67px; background: #3f3f3f; border-bottom: 1px solid #8b8b8b; display: flex; align-items: center; padding-left: 10px; color: #fff; font-size: 12px; }
.sm-head .t { margin-top: 1px; }
.sm-arrows { width: 84px; height: 44px; margin-right: 811px; }
.sm-body { flex: 1; min-height: 0; display: flex; }
.sm-nav { width: 216px; padding-top: 22.500px; }
.sm-item { height: 28.100px; display: flex; align-items: center; padding: 2px 0 0 16px; gap: 8px; font-size: 13.500px; color: #3a3a3a; }
.sm-item svg { width: 16px; height: 17px; }
.sm-item.on { background: #006cba; color: #fff; }
.sm-main { flex: 1; border-left: 1px solid #aaa; display: flex; flex-direction: column; }
.sm-panel { margin: 61px 22px 0 0; height: 300px; border: 1px solid #a3a3a3; border-left: 0; background: #fff; display: flex; align-items: flex-end; justify-content: flex-end; padding: 0 20px 22px; font-size: 12px; color: #333; }
.sm-roles { margin-top: 39px; padding-left: 26px; font-size: 13.400px; font-weight: 700; color: #696969; height: 9px; line-height: 9px; }
.sm-roles .t { transform-origin: top; --sy: 1.1; }
.sm-scroll { width: 17px; background: linear-gradient(90deg, #ededed, #dcdcdc); display: flex; flex-direction: column; align-items: center; padding: 7px 0 4px; color: #8a8a8a; }
.sm-scroll svg { width: 9px; height: 6px; }
.sm-scroll i { margin: 6px 0 auto; width: 17px; height: 94px; background: #c4c4c4; }

/* Explorer windows */
.ex { position: absolute; background: #fff; display: flex; flex-direction: column; overflow: hidden; color: #111; font-size: var(--fs); }
.ex-title, .ex-tabs, .ex-addr { display: grid; align-items: center; }
.bar { width: 1px; background: #999; }
.ex-tabs { color: #444; border-bottom: 1px solid #e1e1e1; }
.file { height: 100%; background: #006cba; color: #fff; font-weight: 400; display: flex; align-items: center; justify-content: center; }
.chev { color: #a5a5a5; width: 9px; }
.arr { color: #6d6d6d; }
.dim { color: #d4d4d4; }
.sc, .ua, .bc, .cr { color: #6e6e6e; }
.box, .search { border: 1px solid #d9d9d9; display: flex; align-items: center; height: 100%; }
.search { justify-content: space-between; color: #6b6b6b; }
.search svg { color: #666; }
.bc { margin-left: auto; }
.rf { height: 100%; display: flex; align-items: center; justify-content: center; }
.box .rf { border-left: 1px solid #d9d9d9; }
.ex-body { display: flex; }
.tree { overflow: hidden; flex: none; }
.row { display: flex; align-items: center; }
.row.on { background: #d9d9d9; }
.pin { margin-left: auto; }
.list { flex: 1; display: flex; flex-direction: column; border-left: 1px solid #ededed; min-width: 0; position: relative; }
.sort { position: absolute; color: #777; }
.cols { display: grid; color: #4c6084; }
.cols span { padding-left: var(--cp); display: flex; align-items: center; }
.cols span + span { border-left: 1px solid #e3e3e3; }
.f { display: grid; align-items: center; }
.g { color: #6d6d6d; letter-spacing: -.1px; }
.status { display: flex; align-items: center; color: #2d4460; flex: 1; }
.status i { width: 1px; height: 12px; background: #eee; }
.dv { margin-left: auto; }

.ex1 { left: 96px; top: 0; width: 786px; height: 493px; --fs: 11.4px; --cp: 6px; }
.ex1 .ex-title { height: 33px; padding: 1px 0 0 11px; grid-template-columns: 21px 12px 22px 21px 15px 8px 556px 45px 46px 1fr; }
.ex1 .fi { width: 13px; height: 18px; }
.ex1 .ck { width: 13px; height: 17px; }
.ex1 .dd { width: 7px; height: 8px; }
.ex1 .bar { height: 13px; }
.ex1 .wc { width: 10px; height: 11px; }
.ex1 .ex-tabs { height: 26px; padding-left: 1px; grid-template-columns: 69.500px 59px 58px 560.500px 19px 1fr; }
.ex1 .file { width: 56px; }
.ex1 .chev { height: 6px; }
.ex1 .help { width: 14px; height: 15px; }
.ex1 .ex-addr { height: 24px; margin-top: 7px; padding-left: 14px; grid-template-columns: 30px 27px 18px 18px 464px 202px; }
.ex1 .arr { width: 12px; height: 12px; }
.ex1 .sc { width: 6px; height: 5px; }
.ex1 .ua { width: 11px; height: 13px; }
.ex1 .box { width: 452px; padding-left: 4px; }
.ex1 .cr { width: 5px; height: 8px; margin: 0 9px 0 8px; }
.ex1 .w1 { width: 40px; }
.ex1 .w2 { width: 76px; }
.ex1 .bc { width: 9px; height: 6px; margin-right: 3px; }
.ex1 .rf { width: 17px; }
.ex1 .rf svg { width: 10px; height: 12px; }
.ex1 .search { padding: 0 7px 0 8px; }
.ex1 .search svg { width: 12px; height: 12px; }
.ex1 .ex-body { height: 370px; margin-top: 7px; }
.ex1 .tree { width: 159px; padding: 17px 2px 0 1px; }
.ex1 .row { height: 26px; }
.ex1 .gap { margin-top: 8px; }
.ex1 .l1 { padding-left: 24px; gap: 5px; }
.ex1 .l1 .i-star { margin-left: 2px; width: 14px; height: 14px; }
.ex1 .l2 { padding-left: 32px; gap: 5.500px; padding-right: 3px; }
.i-star, .i-desk, .i-down, .i-doc, .i-pc { width: 16px; }
.ex1 .i-desk { height: 13px; }
.ex1 .i-down { height: 17px; }
.ex1 .i-doc { width: 12px; height: 17px; margin: 0 2px; }
.ex1 .i-pc { height: 16px; }
.ex1 .pin { width: 11px; height: 12px; }
.ex1 .sort { left: 138px; top: 0; width: 9px; height: 6px; }
.ex1 .cols { height: 28px; grid-template-columns: 272.500px 120px 120px 80px 1fr; }
.ex1 .cols span:first-child { padding-left: 18px; }
.ex1 .files { padding: 5.500px 0 0 15px; }
.ex1 .f { height: 22.600px; width: 574px; padding-left: 6px; grid-template-columns: 18px 240px 120px 1fr; }
.ex1 .f.on { outline: 1px solid #99d1ff; outline-offset: -1px; }
.ex1 .status { padding: 0 9px 0 15px; }
.ex1 .status i { margin-left: 10px; }
.ex1 .dv { width: 22px; height: 25px; margin-right: 4px; }
.ex1 .pv { width: 14px; height: 13px; }

.exr { --fs: 10.600px; --cp: 6px; }
.exr .fi { width: 12px; height: 12px; }
.exr .ck { width: 11px; height: 11px; }
.exr .dd { width: 7px; height: 6px; }
.exr .bar { height: 9px; }
.exr .wc { width: 10px; height: 8px; }
.exr .ex-tabs { height: 17px; }
.exr .file { width: 52px; }
.exr .chev { height: 5px; }
.exr .help { width: 14px; height: 11px; }
.exr .ex-addr { height: 16px; margin-top: 4px; }
.exr .arr { width: 11px; height: 9px; }
.exr .sc { width: 7px; height: 4px; }
.exr .ua { width: 10px; height: 9px; }
.exr .box { padding-left: 3px; }
.exr .cr { width: 4px; height: 6px; margin: 0 9px 0 8px; }
.exr .w1 { width: 54px; }
.exr .dbl { display: flex; width: 22px; padding-left: 7px; }
.exr .dbl svg { width: 4px; height: 5px; color: #333; }
.exr .bc { width: 9px; height: 5px; margin-right: 2px; }
.exr .rf { width: 17px; }
.exr .rf svg { width: 9px; height: 8px; }
.exr .search { padding: 0 7px 0 8px; }
.exr .search svg { width: 11px; height: 9px; }
.exr .row { height: 17px; }
.exr .gap { margin-top: 5.500px; }
.exr .l1 { padding-left: 21px; gap: 4.500px; }
.exr .i-star { width: 13px; height: 10px; margin-left: 2px; }
.exr .l2 { padding-left: 29px; gap: 5px; padding-right: 3px; }
.exr .i-desk { width: 15px; height: 9px; }
.exr .i-down { width: 15px; height: 11px; }
.exr .i-doc { width: 11px; height: 11px; margin: 0 2px; }
.exr .i-pc { width: 15px; height: 11px; }
.exr .pin { width: 10px; height: 8px; }
.exr .sort { width: 8px; height: 4px; top: 0; }
.exr .g { letter-spacing: -.14px; }

.ex2 { left: 395px; top: 34px; width: 517px; height: 160px; border-left: 1px solid #777; border-top: 1px solid #777; }
.ex2 .ex-title { height: 20px; padding-left: 9px; grid-template-columns: 20px 11px 21px 19px 14px 8px 303px 42px 43px 1fr; color: #9b9b9b; }
.ex2 .ex-tabs { height: 18px; grid-template-columns: 65px 56px 54px 306px 18px 1fr; }
.ex2 .ex-addr { padding-left: 12px; grid-template-columns: 28px 24px 18px 17px 224px 186px; }
.ex2 .box { width: 213px; }
.ex2 .ex-body { margin-top: 4px; height: 100px; }
.ex2 .tree { width: 148px; padding: 12px 1px 0 1px; }
.ex2 .cols { height: 20px; margin-top: 0; grid-template-columns: 254px 112px 1fr; }
.ex2 .cols span:first-child { padding-left: 16px; }
.ex2 .sort { left: 130px; }
.ex2 .files { padding: 2px 0 0 19px; }
.ex2 .f { height: 17px; grid-template-columns: 17px 224px 1fr; }

.ex3 { left: 386px; top: 193px; width: 547px; height: 277px; border-bottom: 1px solid #b8c4cf; border-right: 1px solid #b8c4cf; }
.ex3 .ex-title { height: 22px; padding: 0 0 0 9px; grid-template-columns: 20px 11px 21px 19px 14px 8px 332px 42px 43px 1fr; }
.ex3 .ex-tabs { grid-template-columns: 65px 56px 54px 336px 18px 1fr; }
.ex3 .ex-addr { padding-left: 12px; grid-template-columns: 28px 24px 18px 17px 222px 27px 186px; }
.ex3 .focus { border: 1px solid #3a96dd; }
.sel { background: #0b78d4; color: #fff; border-right: 1px solid #e07050; height: 11px; display: flex; align-items: center; margin-left: 6px; }
.ex3 .bc { margin-right: 4px; }
.ex3 .ex-addr > .rf { width: 16px; border: 1px solid #e3e3e3; border-left: 0; }
.ex3 .ex-body { margin-top: 5px; height: 195px; }
.ex3 .tree { width: 148px; padding: 11px 2px 0 1px; }
.ex3 .cols { height: 19px; grid-template-columns: 254px 112px 1fr; }
.ex3 .cols span:first-child { padding-left: 17px; }
.ex3 .sort { left: 129px; }
.empty { text-align: center; padding: 7.500px 0 0; color: #6d6d6d; flex: 1; }
.hscroll { height: 11px; background: #f0f0f0; display: flex; align-items: center; padding: 0 6px; color: #444; }
.hscroll svg { width: 5px; height: 6px; }
.hscroll i { height: 11px; width: 257px; background: #cdcdcd; margin: 0 auto 0 6px; }
.ex3 .status { padding: 0 8px 0 12px; color: #4c6084; }
.ex3 .status i { margin-left: 10px; height: 8px; }
.ex3 .dv { width: 20px; height: 17px; margin-right: 4px; }
.ex3 .pv { width: 13px; height: 9px; }

/* Taskbars */
.task { display: flex; color: #fff; margin-top: auto; flex: none; z-index: 1; }
.tb { display: flex; align-items: center; justify-content: center; border-bottom: 2px solid transparent; color: #eee; }
.tb.open, .tb.active { border-color: #76b9ed; }
.tray { margin-left: auto; display: flex; align-items: center; }
.clock { display: flex; flex-direction: column; align-items: center; }
.note { position: relative; }
.peek { width: 1px; background: #7a8280; align-self: stretch; }
.task-left { height: 43px; background: #0b1715; }
.task-left .tb { width: 40px; margin: 0 5px 0 4px; }
.task-left .tb:nth-child(-n+4) { width: 48px; margin: 0; }
.task-left .tb.active { width: 48px; margin: 0 1px 0 4px; background: #3b4746; }
.task-left .k-win { width: 16px; height: 17px; }
.k-ie { width: 23px; height: 24px; }
.task-left .k-ie { margin-left: 5px; }
.k-ex { width: 22px; height: 20px; }
.k-srv { width: 25px; height: 27px; }
.k-card { width: 24px; height: 17px; margin-bottom: 5px; }
.k-tree { width: 18px; height: 26px; }
.task-left .y-up { width: 13px; height: 8px; margin-right: 9px; }
.task-left .y-bat { width: 16px; height: 13px; margin-right: 8px; }
.task-left .y-net { width: 17px; height: 16px; margin-right: 7px; }
.task-left .y-spk { width: 17px; height: 16px; margin-right: 8px; }
.task-left .clock { width: 55px; gap: 8px; font-size: 11.400px; }
.task-left .note { margin-left: 15px; width: 36px; height: 18px; }
.task-left .note svg { width: 16px; height: 16px; }
.note b { position: absolute; left: 8px; top: 6px; width: 16px; height: 17px; border: 1px solid #888; border-radius: 50%; background: #2b3331; font-size: 10px; line-height: 15px; text-align: center; font-weight: 600; }
.task-left .peek { margin-right: 4px; }

.task-right { height: 29px; background: #030406; }
.task-right .tb { width: 45px; }
.task-right .tb.active { width: 45px; background: #333737; margin: 0 4px 0 3px; }
.task-right .tb.open { width: 38px; }
.task-right .k-win { width: 16px; height: 12px; margin-right: 1px; }
.task-right .k-ie { width: 20px; height: 16px; margin-left: 3px; }
.task-right .k-ex { width: 20px; height: 13px; }
.k-gear { width: 17px; height: 14px; }
.y-hover { width: 22px; height: 29px; background: #1a1c1d; display: flex; align-items: center; justify-content: center; margin-right: 6px; }
.task-right .y-up { width: 12px; height: 6px; }
.task-right .y-bat { width: 14px; height: 9px; margin-right: 7px; }
.task-right .y-net { width: 15px; height: 11px; margin-right: 6px; }
.task-right .y-spk { width: 15px; height: 11px; margin-right: 9px; }
.task-right .clock { width: 50px; gap: 2px; font-size: 10.600px; }
.task-right .note { margin: 0 18px 0 16px; }
.task-right .note svg { width: 16px; height: 12px; }
.task-right .peek { margin-right: 4px; }
.tip { position: absolute; z-index: 2; left: 759px; top: 516px; width: 105px; height: 15px; background: #fff; border: 1px solid #aaa; color: #575757; font-size: 10.600px; display: flex; align-items: center; justify-content: center; }

/* Desktop and Settings */
.bin { position: absolute; left: 7px; top: 7px; width: 60px; display: flex; flex-direction: column; align-items: center; color: #fff; font-size: 10.600px; gap: 4px; }
.bin svg { width: 36px; height: 30px; margin-right: 2px; }
.settings { position: absolute; left: -1px; top: 66px; width: 483px; height: 449px; background: #fff; display: flex; border-bottom: 1px solid #8d98a5; }
.settings aside { width: 34px; background: #e6e6e6; padding-top: 73px; }
.sbox { width: 19px; height: 23px; background: #f2f2f2; border: 2px solid #8e8e8e; border-left: 0; display: flex; align-items: center; color: #777; }
.sbox svg { width: 10px; height: 8px; margin-left: 1px; }
.info { flex: 1; padding-left: 22px; position: relative; color: #111; }
.smin { position: absolute; left: 336px; top: 6px; width: 10px; height: 10px; color: #999; }
h1 { font-size: 24.600px; font-weight: 300; height: 71px; padding-top: 40px; line-height: 22px; color: #000; }
.avatar { width: 188px; height: 142px; }
h2 { font-size: 21px; font-weight: 700; height: 22px; padding-top: 4px; line-height: 19px; margin-left: -1px; }
h2 .t { --sy: .76; }
.browse .t { --sy: .84; }
.dom { font-size: 12.300px; color: #777; height: 18px; line-height: 18px; }
h3 { font-size: 17.500px; height: 18px; margin: 29px 0 0 -1px; line-height: 18px; }
.browse { display: flex; margin: 24px 0 0 6px; gap: 13px; font-size: 12.100px; }
.browse svg { width: 25px; height: 24px; }
.browse .t { margin-top: -2px; }
```
